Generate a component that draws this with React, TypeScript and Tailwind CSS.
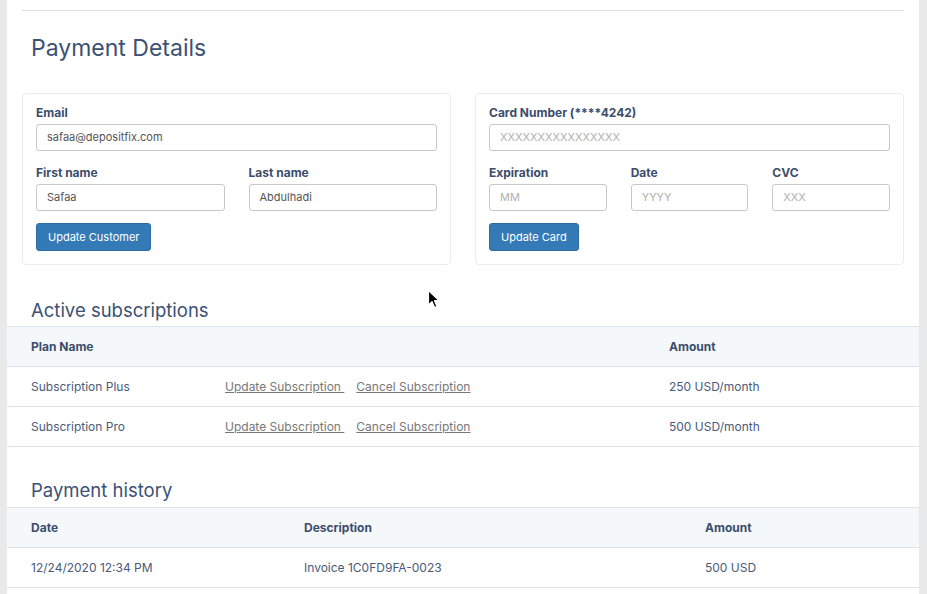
import React from "react";

const font = { fontFamily: "Inter, 'Noto Sans', sans-serif" };

function Field({ label, value, placeholder }: { label: string; value?: string; placeholder?: string }) {
  return (
    <div className="flex flex-col flex-1">
      <label className="text-[12px] leading-[16px] font-bold text-[#3b4d6b] mb-[3px]">{label}</label>
      <div className="h-[27px] border border-[#c8c8c8] rounded-[3px] bg-white flex items-center px-[10px] text-[11px]">
        {value ? (
          <span className="text-[#555]">{value}</span>
        ) : (
          <span className="text-[#b0b0b0]">{placeholder}</span>
        )}
      </div>
    </div>
  );
}

function Button({ children }: { children: React.ReactNode }) {
  return (
    <button className="h-[28px] px-[11px] rounded-[3px] bg-[#337ab7] border border-[#2e6da4] text-white text-[11px] self-start">
      {children}
    </button>
  );
}

function Cursor() {
  return (
    <svg className="absolute left-[427px] top-[289px]" width="14" height="20" viewBox="0 0 14 20">
      <path d="M1.5 1.5 L1.5 16 L5 12.6 L7.6 18.5 L10 17.4 L7.5 11.7 L12.3 11.7 Z" fill="#000" stroke="#fff" strokeWidth="1.2" strokeLinejoin="round" />
    </svg>
  );
}

export default function App() {
  const subs = [
    { name: "Subscription Plus", amount: "250 USD/month" },
    { name: "Subscription Pro", amount: "500 USD/month" },
  ];
  return (
    <div className="relative flex h-[594px] w-[927px] overflow-hidden bg-[#e9e9e9]" style={font}>
      <div className="w-[7px] bg-[#e9e9e9]" />
      <div className="w-[912px] bg-white flex flex-col">
        <div className="mx-[15px] pt-[10px]">
          <div className="border-t border-[#dedede]" />
          <h1 className="mt-[23px] ml-[9px] text-[23px] leading-[28px] text-[#3b5175]">Payment Details</h1>
          <div className="mt-[31px] flex gap-[24px]">
            <div className="flex-1 border border-[#ececec] rounded-[4px] px-[13px] pt-[11px] pb-[13px] flex flex-col">
              <Field label="Email" value="safaa@depositfix.com" />
              <div className="flex gap-[24px] mt-[14px]">
                <Field label="First name" value="Safaa" />
                <Field label="Last name" value="Abdulhadi" />
              </div>
              <div className="mt-[12px] flex">
                <Button>Update Customer</Button>
              </div>
            </div>
            <div className="flex-1 border border-[#ececec] rounded-[4px] px-[13px] pt-[11px] pb-[13px] flex flex-col">
              <Field label="Card Number (****4242)" placeholder="XXXXXXXXXXXXXXXX" />
              <div className="flex gap-[24px] mt-[14px]">
                <Field label="Expiration" placeholder="MM" />
                <Field label="Date" placeholder="YYYY" />
                <Field label="CVC" placeholder="XXX" />
              </div>
              <div className="mt-[12px] flex">
                <Button>Update Card</Button>
              </div>
            </div>
          </div>
        </div>

        <h2 className="mt-[33px] ml-[24px] text-[18.5px] leading-[24px] text-[#3b5175]">Active subscriptions</h2>
        <div className="mt-[4px] text-[12px]">
          <div className="h-[41px] flex items-center bg-[#f5f8fb] border-y border-[#dde3ea] font-bold text-[#3b4d6b] px-[24px]">
            <div className="w-[638px]">Plan Name</div>
            <div>Amount</div>
          </div>
          {subs.map((s) => (
            <div key={s.name} className="h-[40px] flex items-center border-b border-[#dde3ea] text-[#4a5a78] px-[24px]">
              <div className="w-[194px]">{s.name}</div>
              <div className="w-[444px] flex gap-[12px] text-[#777]">
                <span className="underline">Update Subscription&nbsp;</span>
                <span className="underline">Cancel Subscription</span>
              </div>
              <div>{s.amount}</div>
            </div>
          ))}
        </div>

        <h2 className="mt-[31px] ml-[24px] text-[18.5px] leading-[24px] text-[#3b5175]">Payment history</h2>
        <div className="mt-[5px] text-[12px]">
          <div className="h-[41px] flex items-center bg-[#f5f8fb] border-y border-[#dde3ea] font-bold text-[#3b4d6b] px-[24px]">
            <div className="w-[273px]">Date</div>
            <div className="w-[401px]">Description</div>
            <div>Amount</div>
          </div>
          <div className="h-[40px] flex items-center border-b border-[#dde3ea] text-[#4a5a78] px-[24px]">
            <div className="w-[273px]">12/24/2020 12:34 PM</div>
            <div className="w-[401px]">Invoice 1C0FD9FA-0023</div>
            <div>500 USD</div>
          </div>
        </div>
      </div>
      <div className="w-[8px] bg-[#e9e9e9]" />
      <Cursor />
    </div>
  );
}
